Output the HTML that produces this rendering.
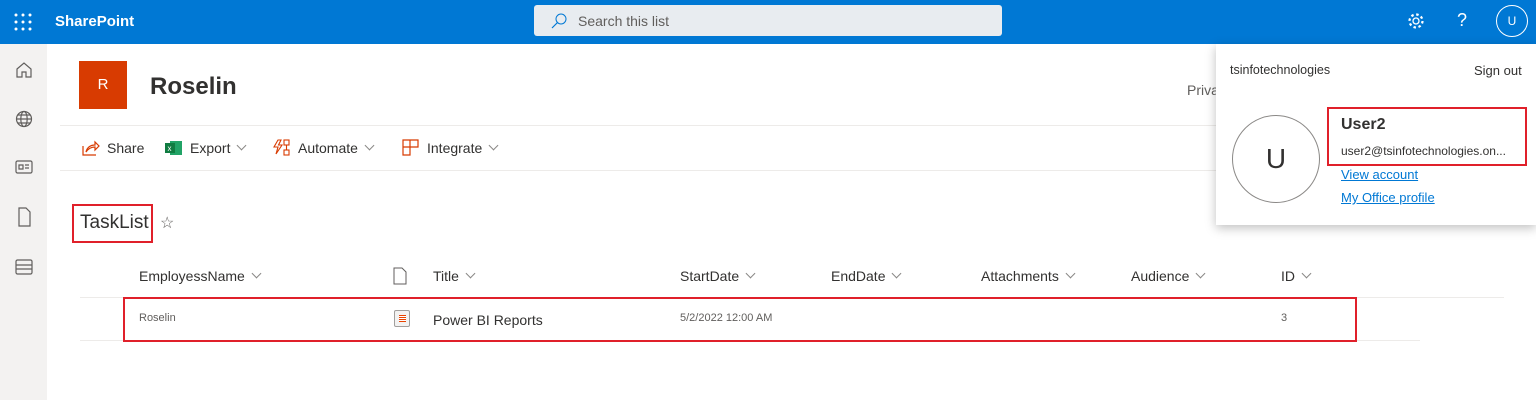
<!DOCTYPE html>
<html><head><meta charset="utf-8"><style>
*{margin:0;padding:0;box-sizing:border-box}
body{width:1536px;height:400px;overflow:hidden;background:#fff;font-family:"Liberation Sans",sans-serif;color:#323130;position:relative}
.a{position:absolute}
.top{left:0;top:0;width:1536px;height:44px;background:#0078d4}
.rail{left:0;top:44px;width:47px;height:356px;background:#f3f2f1}
.hd{font-size:14px;color:#323130}
.red{border:2px solid #e0202a}
.chev{display:inline-block;width:7px;height:7px;border-right:1px solid #8a8886;border-bottom:1px solid #8a8886;transform:rotate(45deg);margin-left:8px;position:relative;top:-4px}
a{color:#0078d4}
.tb{font-size:14px;top:140px}
</style></head><body>
<div class="a top"></div>
<svg class="a" style="left:14px;top:13px" width="18" height="18"><g fill="#fff"><circle cx="2" cy="2" r="1.5"/><circle cx="9" cy="2" r="1.5"/><circle cx="16" cy="2" r="1.5"/><circle cx="2" cy="9" r="1.5"/><circle cx="9" cy="9" r="1.5"/><circle cx="16" cy="9" r="1.5"/><circle cx="2" cy="16" r="1.5"/><circle cx="9" cy="16" r="1.5"/><circle cx="16" cy="16" r="1.5"/></g></svg>
<div class="a" style="left:55px;top:13px;color:#fff;font-weight:bold;font-size:15px">SharePoint</div>
<div class="a" style="left:534px;top:5px;width:468px;height:31px;background:#e8ecf0;border-radius:3px"></div>
<svg class="a" style="left:550px;top:12px" width="18" height="18"><circle cx="11" cy="7" r="5" fill="none" stroke="#0078d4" stroke-width="1"/><path d="M7.5 10.5 2 16" stroke="#0078d4" stroke-width="1.2"/></svg>
<div class="a" style="left:578px;top:13px;font-size:14px;color:#605e5c">Search this list</div>
<svg class="a" style="left:1406px;top:11px" width="20" height="20"><circle cx="10" cy="10" r="3" fill="none" stroke="#fff" stroke-width="1.3"/><circle cx="10" cy="10" r="6.5" fill="none" stroke="#fff" stroke-width="2.2" stroke-dasharray="2.5 2.6"/></svg>
<div class="a" style="left:1457px;top:10px;color:#fff;font-size:18px">?</div>
<div class="a" style="left:1496px;top:5px;width:32px;height:32px;border:1px solid #fff;border-radius:50%;color:#fff;font-size:12px;text-align:center;line-height:30px">U</div>
<div class="a rail"></div>
<svg class="a" style="left:14px;top:60px" width="20" height="230" fill="none" stroke="#605e5c" stroke-width="1.2">
<path d="M3 9 10 3 17 9V17H12V12H8V17H3Z"/>
<circle cx="10" cy="59" r="7.5"/><ellipse cx="10" cy="59" rx="3.2" ry="7.5"/><path d="M2.5 59H17.5M4 55H16M4 63H16"/>
<rect x="2" y="101" width="16" height="12" rx="1.5"/><path d="M5 105H9V109H5ZM11 105H15M11 108H15"/>
<path d="M5 148H12L16 152V166H5Z"/>
<rect x="2" y="200" width="16" height="14" rx="1.5"/><path d="M2 205H18M2 209H18"/>
</svg>
<div class="a" style="left:79px;top:61px;width:48px;height:48px;background:#d83b01;color:#fff;font-size:15px;text-align:center;line-height:48px">R</div>
<div class="a" style="left:150px;top:73px;font-size:24px;font-weight:bold;color:#323130">Roselin</div>
<div class="a" style="left:1187px;top:82px;font-size:14px;color:#605e5c">Priva</div>
<div class="a" style="left:60px;top:125px;width:1476px;height:1px;background:#edebe9"></div>
<div class="a" style="left:60px;top:170px;width:1476px;height:1px;background:#edebe9"></div>
<svg class="a" style="left:82px;top:140px" width="18" height="16" fill="none" stroke="#d83b01" stroke-width="1.2"><path d="M1 6V15H14"/><path d="M4 12C5 7 9 5 13 5V2L17 6 13 10V7C9 7 6 9 4 12Z"/></svg>
<div class="a tb" style="left:107px">Share</div>
<svg class="a" style="left:165px;top:140px" width="18" height="16"><rect x="5" y="1" width="12" height="14" fill="#21a366"/><rect x="0" y="3" width="10" height="10" fill="#107c41"/><text x="2.5" y="11" font-size="8" fill="#fff" font-family="Liberation Sans">x</text></svg>
<div class="a tb" style="left:190px">Export<span class="chev"></span></div>
<svg class="a" style="left:273px;top:139px" width="18" height="18" fill="none" stroke="#d83b01" stroke-width="1.1"><path d="M5 1 1 8H5L3 15 9 6H5.5L8 1Z"/><rect x="11" y="1" width="5" height="5"/><rect x="11" y="11" width="5" height="5"/><path d="M13.5 6V11"/></svg>
<div class="a tb" style="left:298px">Automate<span class="chev"></span></div>
<svg class="a" style="left:402px;top:139px" width="17" height="17" fill="none" stroke="#d83b01" stroke-width="1.2"><path d="M1 1H16V8H8V16H1ZM8 1V8M1 8H8"/></svg>
<div class="a tb" style="left:427px">Integrate<span class="chev"></span></div>
<div class="a red" style="left:72px;top:204px;width:81px;height:39px"></div>
<div class="a" style="left:80px;top:212px;font-size:19px;color:#323130">TaskList</div>
<div class="a" style="left:160px;top:213px;font-size:16px;color:#605e5c">☆</div>
<div class="a hd" style="left:139px;top:268px">EmployessName<span class="chev"></span></div>
<svg class="a" style="left:393px;top:267px" width="14" height="18" fill="none" stroke="#605e5c"><path d="M1 1H9L13 5V17H1Z"/></svg>
<div class="a hd" style="left:433px;top:268px">Title<span class="chev"></span></div>
<div class="a hd" style="left:680px;top:268px">StartDate<span class="chev"></span></div>
<div class="a hd" style="left:831px;top:268px">EndDate<span class="chev"></span></div>
<div class="a hd" style="left:981px;top:268px">Attachments<span class="chev"></span></div>
<div class="a hd" style="left:1131px;top:268px">Audience<span class="chev"></span></div>
<div class="a hd" style="left:1281px;top:268px">ID<span class="chev"></span></div>
<div class="a" style="left:80px;top:297px;width:1424px;height:1px;background:#edebe9"></div>
<div class="a" style="left:80px;top:340px;width:1340px;height:1px;background:#edebe9"></div>
<div class="a red" style="left:123px;top:297px;width:1234px;height:45px"></div>
<div class="a" style="left:139px;top:312px;font-size:11px;color:#605e5c">Roselin</div>
<div class="a" style="left:394px;top:310px;width:16px;height:17px;border:1px solid #a19f9d;border-radius:2px;background:#f3f2f1"><div style="margin:4px 4px;width:7px;height:7px;background:repeating-linear-gradient(#ea4300 0 1px,#fff 1px 2px)"></div></div>
<div class="a" style="left:433px;top:312px;font-size:14px">Power BI Reports</div>
<div class="a" style="left:680px;top:312px;font-size:11px;color:#605e5c">5/2/2022 12:00 AM</div>
<div class="a" style="left:1281px;top:312px;font-size:11px;color:#605e5c">3</div>
<div class="a" style="left:1216px;top:44px;width:320px;height:181px;background:#fff;box-shadow:0 3px 10px rgba(0,0,0,.25)"></div>
<div class="a" style="left:1230px;top:63px;font-size:12.5px;color:#323130">tsinfotechnologies</div>
<div class="a" style="left:1474px;top:63px;font-size:13px;color:#323130">Sign out</div>
<div class="a" style="left:1232px;top:115px;width:88px;height:88px;border:1px solid #8a8886;border-radius:50%;text-align:center;line-height:86px;font-size:28px">U</div>
<div class="a red" style="left:1327px;top:107px;width:200px;height:59px"></div>
<div class="a" style="left:1341px;top:116px;font-size:16px;font-weight:bold">User2</div>
<div class="a" style="left:1341px;top:144px;font-size:12px">user2@tsinfotechnologies.on...</div>
<div class="a" style="left:1341px;top:167px;font-size:13px"><a style="text-decoration:underline">View account</a></div>
<div class="a" style="left:1341px;top:190px;font-size:13px"><a style="text-decoration:underline">My Office profile</a></div>
</body></html>
